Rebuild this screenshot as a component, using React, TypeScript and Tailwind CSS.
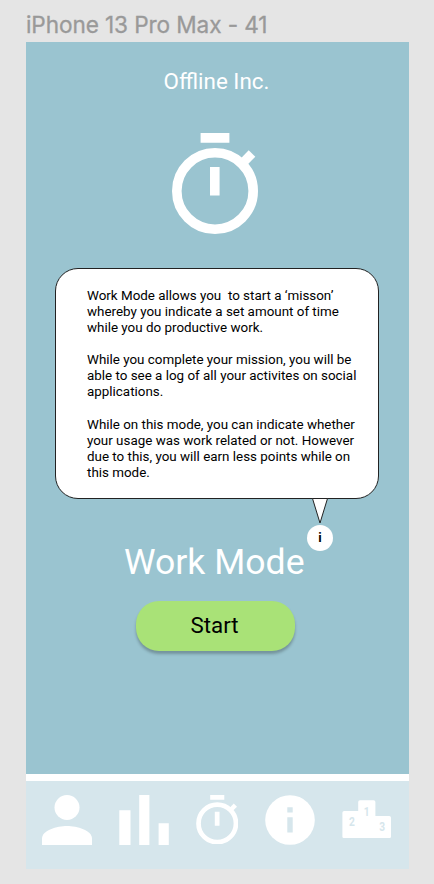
const paragraphs: string[][] = [
  ["Work Mode allows you\u00a0 to start a ‘misson’", "whereby you indicate a set amount of time", "while you do productive work."],
  ["While you complete your mission, you will be", "able to see a log of all your activites on social", "applications."],
  ["While on this mode, you can indicate whether", "your usage was work related or not. However", "due to this, you will earn less points while on", "this mode."],
];

function Stopwatch({ className }: { className: string }) {
  return (
    <svg viewBox="0 0 86 101" className={className} fill="none" aria-hidden="true">
      <path d="M28.6 0h28.8v9.8H28.6zM38 34h9.6v28.5H38z" fill="#fff" />
      <circle cx="43" cy="58" r="38.2" stroke="#fff" strokeWidth="9.6" />
      <path d="M68 26.3l8.7-9 6.6 6.5-8.9 9z" fill="#fff" />
    </svg>
  );
}

function Person() {
  return (
    <svg viewBox="0 0 50 50" className="h-[50px] w-[50px]" fill="#fff" aria-hidden="true">
      <circle cx="25" cy="12.5" r="12.5" />
      <path d="M0 50v-6.4C0 35.2 15 31 25 31s25 4.2 25 12.6V50z" />
    </svg>
  );
}

function Bars() {
  return (
    <svg viewBox="0 0 50 50" className="ml-[26.5px] h-[50px] w-[50px]" fill="#fff" aria-hidden="true">
      <path d="M.3 15.2h11.2V50H.3zM20.2 0h10.2v50H20.2zM39.6 28.2h10.2V50H39.6z" />
    </svg>
  );
}

function Info() {
  return (
    <svg viewBox="0 0 50 50" className="ml-[26.3px] h-[50px] w-[50px]" aria-hidden="true">
      <circle cx="25" cy="25" r="24.8" fill="#fff" />
      <path d="M22.3 12.2h5.4v5.4h-5.4zM22.3 22.2h5.4v15.2h-5.4z" fill="#d6e6ec" />
    </svg>
  );
}

function Podium() {
  return (
    <svg viewBox="0 0 50 50" className="ml-[27.2px] h-[50px] w-[50px]" aria-hidden="true">
      <path
        d="M.4 17.8q0-1.8 1.8-1.8h14V7q0-1.8 1.8-1.8h13.6q1.8 0 1.8 1.8v14h13.8q1.8 0 1.8 1.8v18.9q0 1.4-1.4 1.4H1.8q-1.4 0-1.4-1.4z"
        fill="#fff"
      />
      <g fill="#d6e6ec" fontFamily="Roboto, sans-serif" fontWeight="700" fontSize="13.5" textAnchor="middle">
        <text transform="translate(24.7 20.5) scale(.75 1)">1</text>
        <text transform="translate(9.9 31) scale(.75 1)">2</text>
        <text transform="translate(40.1 36) scale(.75 1)">3</text>
      </g>
    </svg>
  );
}

export default function App() {
  return (
    <div className="h-[884px] w-[434px] overflow-hidden bg-[#e5e5e5] pl-[26px] font-['Roboto',sans-serif]">
      <h2 className="h-[41.5px] whitespace-nowrap pt-[11px] font-['Inter',sans-serif] text-[22.6px] leading-[28px] tracking-[-0.1px] text-[#999999] [-webkit-text-stroke:0.3px_#999999]">
        iPhone 13 Pro Max - 41
      </h2>
      <div className="flex h-[827px] w-[383px] flex-col bg-[#9ac4d0]">
        <main className="flex h-[732px] shrink-0 flex-col items-center">
          <h1 className="mt-[25px] -ml-[2px] h-7 whitespace-nowrap text-[22.4px] leading-7 text-white">Offline Inc.</h1>
          <Stopwatch className="mt-[38.5px] -ml-[5.5px] h-[101px] w-[86px] shrink-0" />
          <section className="relative mt-[33.5px] -ml-px h-[231.5px] w-[324px] shrink-0 rounded-[23px] border border-[#222] bg-white pt-[19.3px] pl-[31px] text-[13.4px] leading-[16.1px] text-black">
            {paragraphs.map((lines, index) => (
              <p key={index} className="mb-[16.1px] whitespace-nowrap">
                {lines.map((line) => (
                  <span key={line} className="block">{line}</span>
                ))}
              </p>
            ))}
            <svg className="absolute top-[229.5px] left-[255px] h-[27px] w-[18px]" viewBox="0 0 18 27" aria-hidden="true">
              <path d="M1.5.5h15L9 25z" fill="#fff" stroke="#222" strokeWidth="1" />
            </svg>
            <span className="absolute top-[256px] left-[251px] flex h-[26px] w-[26px] items-center justify-center rounded-full bg-white pt-[2px] text-[13px] font-bold">
              i
            </span>
          </section>
          <h2 className="mt-[41px] -ml-[6.5px] h-11 whitespace-nowrap text-[35.6px] leading-[44px] text-white">Work Mode</h2>
          <button className="mt-[16.5px] -ml-[4px] h-[50px] w-[159.5px] shrink-0 rounded-[23px] bg-[#a9e277] pr-[2px] text-[22.3px] text-black shadow-[0_3px_3px_rgba(0,0,0,0.25)]">
            Start
          </button>
        </main>
        <nav className="flex h-[95px] items-start border-t-[7.5px] border-white bg-[#d6e6ec] pt-[14px] pl-[16px]">
          <Person />
          <Bars />
          <Stopwatch className="ml-[27.3px] h-[49.5px] w-[42.5px] shrink-0" />
          <Info />
          <Podium />
        </nav>
      </div>
    </div>
  );
}
